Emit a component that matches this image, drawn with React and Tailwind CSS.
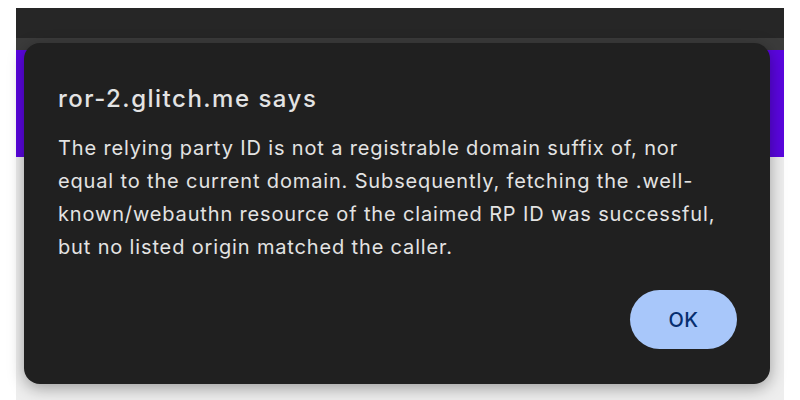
const App = () => {
  return (
    <div className="relative w-[800px] h-[400px] bg-white overflow-hidden" style={{ fontFamily: 'Inter, "Noto Sans", sans-serif' }}>
      {/* Page behind the dialog */}
      <div className="mx-4 mt-2 h-[392px] flex flex-col bg-[#ededed]">
        <div className="h-[30px] bg-[#262626]"></div>
        <div className="h-[12px] bg-[#3b3b3b]"></div>
        <div className="h-[107px] bg-[#5a06df]"></div>
        <div className="flex-1 bg-[#eeeeee]"></div>
      </div>

      {/* Alert dialog */}
      <div className="absolute left-[24px] top-[43px] w-[746px] h-[341px] rounded-[16px] bg-[#202020] shadow-[0_4px_16px_rgba(0,0,0,0.35)] flex flex-col pl-[34px] pr-[20px] pt-[42px] pb-[35px]">
        <h2 className="text-[24px] leading-[28px] font-medium tracking-[1.5px] text-[#e3e3e3]">
          ror-2.glitch.me says
        </h2>
        <p className="mt-[19px] w-[692px] text-[20px] leading-[33px] tracking-[0.85px] text-[#e3e3e3]">
          The relying party ID is not a registrable domain suffix of, nor
          <br />
          equal to the current domain. Subsequently, fetching the .well-known/webauthn resource of the claimed RP ID was successful, but no listed origin matched the caller.
        </p>
        <div className="mt-auto flex justify-end pr-[13px]">
          <button className="w-[107px] h-[59px] rounded-full bg-[#a8c7fa] text-[#062e6f] text-[20px] font-medium tracking-[0.5px]">
            OK
          </button>
        </div>
      </div>
    </div>
  );
};

export default App;
